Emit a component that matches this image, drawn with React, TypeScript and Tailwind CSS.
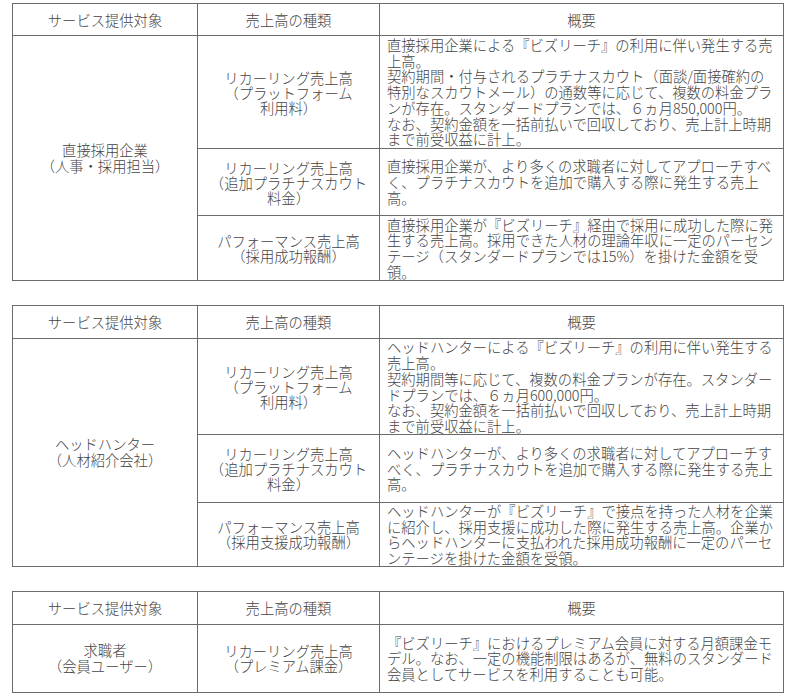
type Row = {
  kind: string[];
  summary: string[];
  h: string;
};

type Block = {
  target: string[];
  headH: string;
  rows: Row[];
};

const blocks: Block[] = [
  {
    target: ["直接採用企業", "（人事・採用担当）"],
    headH: "h-[32px]",
    rows: [
      {
        kind: ["リカーリング売上高", "（プラットフォーム", "利用料）"],
        summary: [
          "直接採用企業による『ビズリーチ』の利用に伴い発生する売",
          "上高。",
          "契約期間・付与されるプラチナスカウト（面談/面接確約の",
          "特別なスカウトメール）の通数等に応じて、複数の料金プラ",
          "ンが存在。スタンダードプランでは、６ヵ月850,000円。",
          "なお、契約金額を一括前払いで回収しており、売上計上時期",
          "まで前受収益に計上。",
        ],
        h: "h-[113px]",
      },
      {
        kind: ["リカーリング売上高", "（追加プラチナスカウト", "料金）"],
        summary: [
          "直接採用企業が、より多くの求職者に対してアプローチすべ",
          "く、プラチナスカウトを追加で購入する際に発生する売上",
          "高。",
        ],
        h: "h-[67px]",
      },
      {
        kind: ["パフォーマンス売上高", "（採用成功報酬）"],
        summary: [
          "直接採用企業が『ビズリーチ』経由で採用に成功した際に発",
          "生する売上高。採用できた人材の理論年収に一定のパーセン",
          "テージ（スタンダードプランでは15%）を掛けた金額を受",
          "領。",
        ],
        h: "h-[65px]",
      },
    ],
  },
  {
    target: ["ヘッドハンター", "（人材紹介会社）"],
    headH: "h-[33px]",
    rows: [
      {
        kind: ["リカーリング売上高", "（プラットフォーム", "利用料）"],
        summary: [
          "ヘッドハンターによる『ビズリーチ』の利用に伴い発生する",
          "売上高。",
          "契約期間等に応じて、複数の料金プランが存在。スタンダー",
          "ドプランでは、６ヵ月600,000円。",
          "なお、契約金額を一括前払いで回収しており、売上計上時期",
          "まで前受収益に計上。",
        ],
        h: "h-[96px]",
      },
      {
        kind: ["リカーリング売上高", "（追加プラチナスカウト", "料金）"],
        summary: [
          "ヘッドハンターが、より多くの求職者に対してアプローチす",
          "べく、プラチナスカウトを追加で購入する際に発生する売上",
          "高。",
        ],
        h: "h-[68px]",
      },
      {
        kind: ["パフォーマンス売上高", "（採用支援成功報酬）"],
        summary: [
          "ヘッドハンターが『ビズリーチ』で接点を持った人材を企業",
          "に紹介し、採用支援に成功した際に発生する売上高。企業か",
          "らヘッドハンターに支払われた採用成功報酬に一定のパーセ",
          "ンテージを掛けた金額を受領。",
        ],
        h: "h-[63px]",
      },
    ],
  },
  {
    target: ["求職者", "（会員ユーザー）"],
    headH: "h-[33px]",
    rows: [
      {
        kind: ["リカーリング売上高", "（プレミアム課金）"],
        summary: [
          "『ビズリーチ』におけるプレミアム会員に対する月額課金モ",
          "デル。なお、一定の機能制限はあるが、無料のスタンダード",
          "会員としてサービスを利用することも可能。",
        ],
        h: "h-[68px]",
      },
    ],
  },
];

function Lines({ items }: { items: string[] }) {
  return (
    <>
      {items.map((t, i) => (
        <div key={i} className="whitespace-nowrap">
          {t}
        </div>
      ))}
    </>
  );
}

function RevenueTable({ block }: { block: Block }) {
  const cell = "border border-[#6b6b6b] align-middle";
  return (
    <table className="w-[771px] border-collapse table-fixed">
      <colgroup>
        <col className="w-[185px]" />
        <col className="w-[182px]" />
        <col className="w-[404px]" />
      </colgroup>
      <thead>
        <tr>
          <th className={`${cell} ${block.headH} font-light text-center`}>サービス提供対象</th>
          <th className={`${cell} font-light text-center`}>売上高の種類</th>
          <th className={`${cell} font-light text-center`}>概要</th>
        </tr>
      </thead>
      <tbody>
        {block.rows.map((row, i) => (
          <tr key={i}>
            {i === 0 && (
              <td rowSpan={block.rows.length} className={`${cell} text-center leading-[16px]`}>
                <Lines items={block.target} />
              </td>
            )}
            <td className={`${cell} ${row.h} text-center leading-[15px]`}>
              <Lines items={row.kind} />
            </td>
            <td className={`${cell} pl-[7px] pr-1 leading-[15.7px]`}>
              <Lines items={row.summary} />
            </td>
          </tr>
        ))}
      </tbody>
    </table>
  );
}

export default function App() {
  return (
    <main
      className="w-[800px] h-[700px] bg-white pl-[12px] pt-[3px] text-[14.3px] font-light text-[#444] overflow-hidden"
      style={{ fontFamily: '"Noto Sans CJK JP", "Noto Sans", sans-serif' }}
    >
      <div className="flex flex-col gap-[24px]">
        {blocks.map((b, i) => (
          <RevenueTable key={i} block={b} />
        ))}
      </div>
    </main>
  );
}
